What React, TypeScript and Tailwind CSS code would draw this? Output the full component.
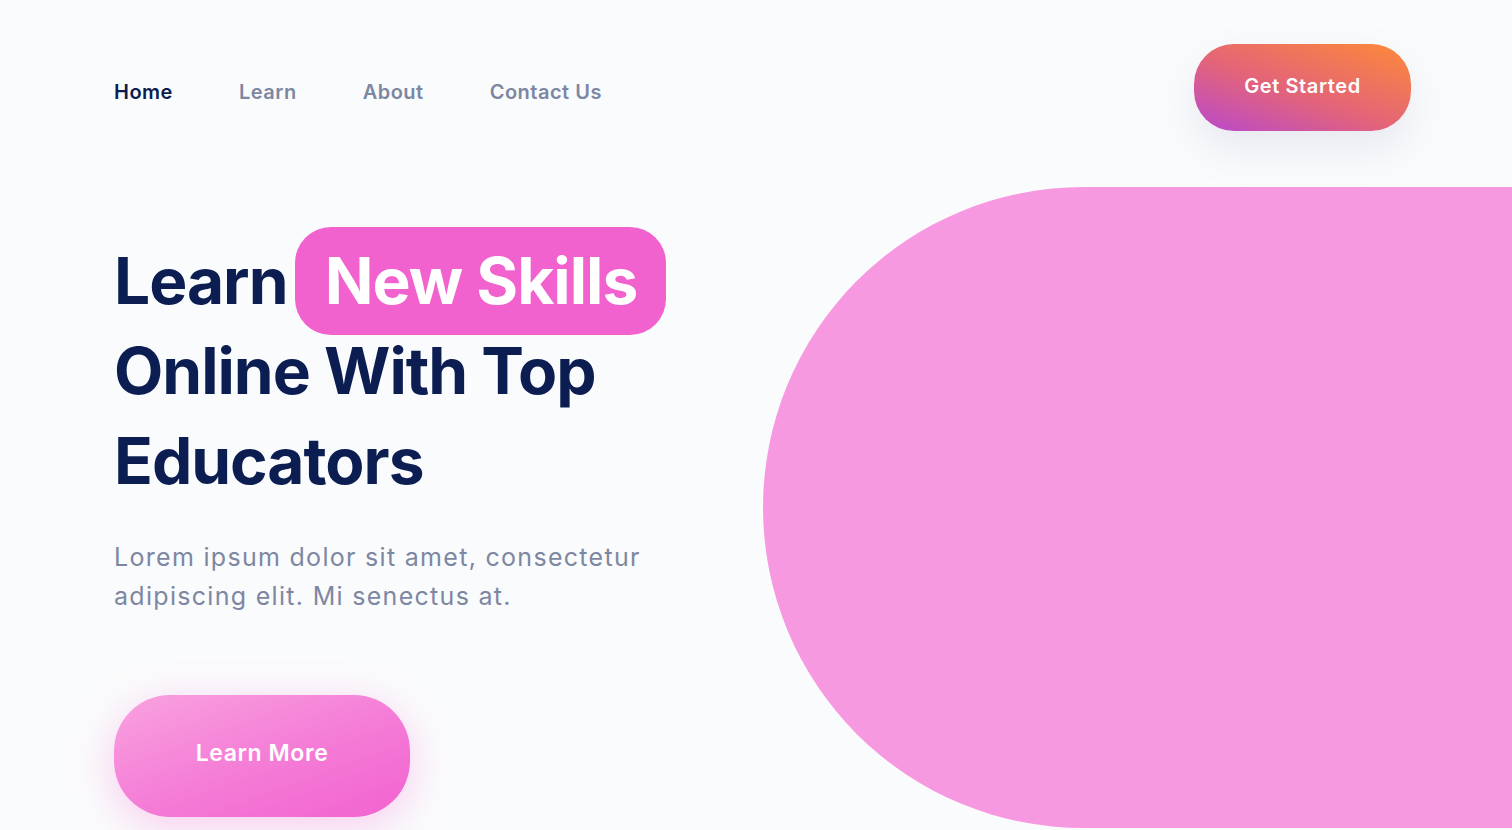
export default function App() {
  const font = { fontFamily: "Inter, 'Noto Sans', sans-serif" };

  return (
    <div className="h-[830px] w-full overflow-hidden bg-[#fafbfc] text-[#0b1d51]" style={font}>
      <header className="flex items-start justify-between pl-[114px] pr-[101px] pt-[44px]">
        <nav className="mt-[33px] flex items-center gap-[66px] text-[20px] font-semibold tracking-[0.5px] text-[#7d87a2]">
          <a href="#" className="text-[#0b1d51]">Home</a>
          <a href="#">Learn</a>
          <a href="#">About</a>
          <a href="#">Contact Us</a>
        </nav>
        <button className="h-[87px] w-[217px] rounded-[40px] bg-[linear-gradient(200deg,#fd8a37_0%,#e36479_55%,#b848cf_100%)] pb-[3px] text-[20px] font-semibold tracking-[0.6px] text-white shadow-[0_18px_40px_rgba(120,130,170,0.14)]">
          Get Started
        </button>
      </header>

      <main className="flex items-start">
        <section className="w-[700px] shrink-0 pl-[114px] pt-[105px]">
          <h1 className="text-[64px] font-bold leading-[90px] tracking-[-1px]">
            <div className="flex h-[90px] items-center gap-[8px]">
              <span>Learn</span>
              <span className="flex h-[108px] w-[371px] shrink-0 items-center justify-center whitespace-nowrap rounded-[36px] bg-[#f262cf] text-white">
                New Skills
              </span>
            </div>
            <div className="whitespace-nowrap">Online With Top</div>
            <div>Educators</div>
          </h1>
          <p className="mt-[32px] w-[540px] text-[25px] leading-[39px] tracking-[1.3px] text-[#7d87a2]">
            Lorem ipsum dolor sit amet, consectetur adipiscing elit. Mi senectus at.
          </p>
          <button className="mt-[79px] h-[122px] w-[296px] rounded-[56px] bg-[linear-gradient(160deg,#f9a2df_0%,#f47bd6_55%,#f262cf_100%)] pb-[6px] text-[23px] font-semibold tracking-[0.6px] text-white shadow-[0_10px_40px_rgba(245,120,215,0.35)]">
            Learn More
          </button>
        </section>
        <div className="ml-auto mt-[56px] h-[641px] w-[749px] shrink-0 rounded-l-[321px] bg-[#f799e1]" />
      </main>
    </div>
  );
}
